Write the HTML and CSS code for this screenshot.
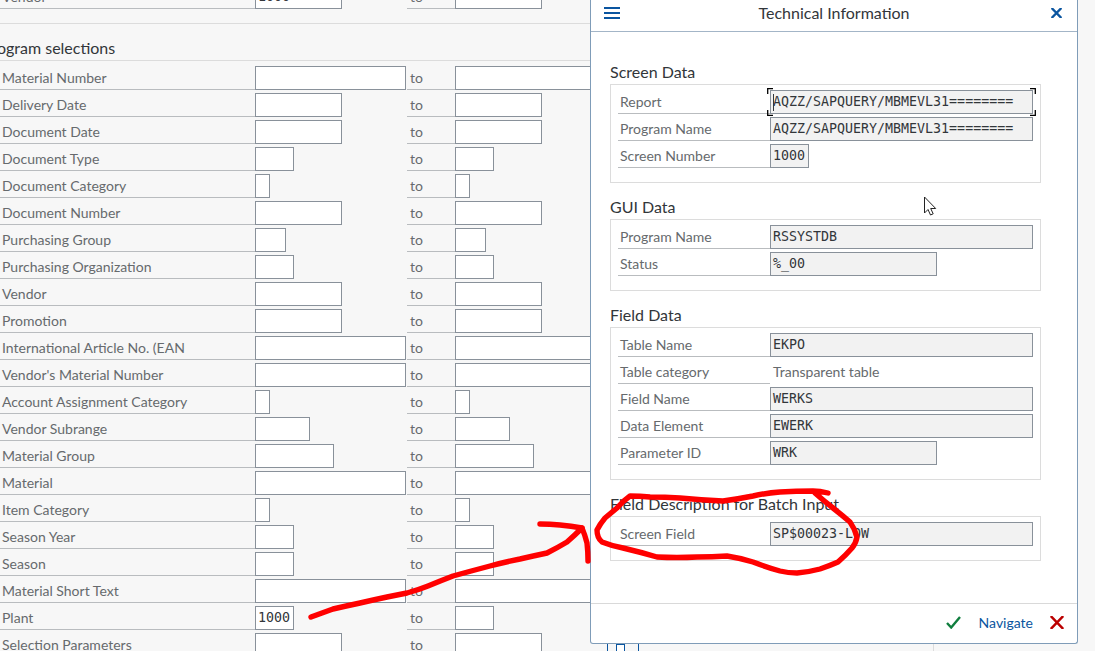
FILE: index.html
```html
<!DOCTYPE html>
<html lang="en">
<head>
<meta charset="utf-8">
<title>Technical Information</title>
<link rel="stylesheet" href="styles.css">
</head>
<body>
<main class="page">
  <div class="row row-cut">
    <div class="label">Vendor</div>
    <div class="cell"><div class="input w87 mono">1000</div></div>
    <div class="label to">to</div>
    <div class="cell"><div class="input w87"></div></div>
  </div>
  <div class="spacer"></div>
  <h2 class="group-title"><span>Program selections</span></h2>
  <div class="rows">
    <div class="row"><div class="label">Material Number</div><div class="cell"><div class="input w151"></div></div><div class="label to">to</div><div class="cell"><div class="input w151"></div></div></div>
    <div class="row"><div class="label">Delivery Date</div><div class="cell"><div class="input w87"></div></div><div class="label to">to</div><div class="cell"><div class="input w87"></div></div></div>
    <div class="row"><div class="label">Document Date</div><div class="cell"><div class="input w87"></div></div><div class="label to">to</div><div class="cell"><div class="input w87"></div></div></div>
    <div class="row"><div class="label">Document Type</div><div class="cell"><div class="input w39"></div></div><div class="label to">to</div><div class="cell"><div class="input w39"></div></div></div>
    <div class="row"><div class="label">Document Category</div><div class="cell"><div class="input w15"></div></div><div class="label to">to</div><div class="cell"><div class="input w15"></div></div></div>
    <div class="row"><div class="label">Document Number</div><div class="cell"><div class="input w87"></div></div><div class="label to">to</div><div class="cell"><div class="input w87"></div></div></div>
    <div class="row"><div class="label">Purchasing Group</div><div class="cell"><div class="input w31"></div></div><div class="label to">to</div><div class="cell"><div class="input w31"></div></div></div>
    <div class="row"><div class="label">Purchasing Organization</div><div class="cell"><div class="input w39"></div></div><div class="label to">to</div><div class="cell"><div class="input w39"></div></div></div>
    <div class="row"><div class="label">Vendor</div><div class="cell"><div class="input w87"></div></div><div class="label to">to</div><div class="cell"><div class="input w87"></div></div></div>
    <div class="row"><div class="label">Promotion</div><div class="cell"><div class="input w87"></div></div><div class="label to">to</div><div class="cell"><div class="input w87"></div></div></div>
    <div class="row"><div class="label">International Article No. (EAN</div><div class="cell"><div class="input w151"></div></div><div class="label to">to</div><div class="cell"><div class="input w151"></div></div></div>
    <div class="row"><div class="label">Vendor's Material Number</div><div class="cell"><div class="input w151"></div></div><div class="label to">to</div><div class="cell"><div class="input w151"></div></div></div>
    <div class="row"><div class="label">Account Assignment Category</div><div class="cell"><div class="input w15"></div></div><div class="label to">to</div><div class="cell"><div class="input w15"></div></div></div>
    <div class="row"><div class="label">Vendor Subrange</div><div class="cell"><div class="input w55"></div></div><div class="label to">to</div><div class="cell"><div class="input w55"></div></div></div>
    <div class="row"><div class="label">Material Group</div><div class="cell"><div class="input w79"></div></div><div class="label to">to</div><div class="cell"><div class="input w79"></div></div></div>
    <div class="row"><div class="label">Material</div><div class="cell"><div class="input w151"></div></div><div class="label to">to</div><div class="cell"><div class="input w151"></div></div></div>
    <div class="row"><div class="label">Item Category</div><div class="cell"><div class="input w15"></div></div><div class="label to">to</div><div class="cell"><div class="input w15"></div></div></div>
    <div class="row"><div class="label">Season Year</div><div class="cell"><div class="input w39"></div></div><div class="label to">to</div><div class="cell"><div class="input w39"></div></div></div>
    <div class="row"><div class="label">Season</div><div class="cell"><div class="input w39"></div></div><div class="label to">to</div><div class="cell"><div class="input w39"></div></div></div>
    <div class="row"><div class="label">Material Short Text</div><div class="cell"><div class="input w151"></div></div><div class="label to">to</div><div class="cell"><div class="input w151"></div></div></div>
    <div class="row"><div class="label">Plant</div><div class="cell"><div class="input w39 mono">1000</div></div><div class="label to">to</div><div class="cell"><div class="input w39"></div></div></div>
    <div class="row"><div class="label">Selection Parameters</div><div class="cell"><div class="input w87"></div></div><div class="label to">to</div><div class="cell"><div class="input w87"></div><div class="tool-btn"><span class="tool-box"></span></div><div class="side-rule"></div></div></div>
  </div>

  <section class="dialog">
    <header class="dialog-head">
      <svg class="icon-menu" width="16" height="12" viewBox="0 0 16 12"><path fill="#0a55a0" d="M0 0h16v2H0zM0 5h16v2H0zM0 10h16v2H0z"/></svg>
      <h1 class="dialog-title">Technical Information</h1>
      <svg class="icon-close" width="11" height="10" viewBox="0 0 11 10"><path fill="none" stroke="#0a55a0" stroke-width="2.4" d="M.6 0 10.4 10M10.4 0 .6 10"/></svg>
    </header>
    <div class="dialog-body">
      <h3 class="sec-title">Screen Data</h3>
      <div class="box">
        <div class="drow"><div class="dlabel">Report</div><div class="dinput w263 mono"><span class="caret"></span>AQZZ/SAPQUERY/MBMEVL31========<svg class="focus-marks" width="269" height="28" viewBox="0 0 269 28"><path fill="none" stroke="#000" stroke-width="1.300" d="M6 .7H.7V6M263 .7h5.300V6M6 27.300H.7V22M263 27.300h5.300V22"/></svg></div></div>
        <div class="drow"><div class="dlabel">Program Name</div><div class="dinput w263 mono">AQZZ/SAPQUERY/MBMEVL31========</div></div>
        <div class="drow"><div class="dlabel">Screen Number</div><div class="dinput w39 mono">1000</div></div>
      </div>
      <h3 class="sec-title">GUI Data</h3>
      <div class="box">
        <div class="drow"><div class="dlabel">Program Name</div><div class="dinput w263 mono">RSSYSTDB</div></div>
        <div class="drow"><div class="dlabel">Status</div><div class="dinput w167 mono">%_00</div></div>
      </div>
      <h3 class="sec-title">Field Data</h3>
      <div class="box">
        <div class="drow"><div class="dlabel">Table Name</div><div class="dinput w263 mono">EKPO</div></div>
        <div class="drow"><div class="dlabel">Table category</div><div class="dtext">Transparent table</div></div>
        <div class="drow"><div class="dlabel">Field Name</div><div class="dinput w263 mono">WERKS</div></div>
        <div class="drow"><div class="dlabel">Data Element</div><div class="dinput w263 mono">EWERK</div></div>
        <div class="drow"><div class="dlabel">Parameter ID</div><div class="dinput w167 mono">WRK</div></div>
      </div>
      <h3 class="sec-title">Field Description for Batch Input</h3>
      <div class="box">
        <div class="drow"><div class="dlabel">Screen Field</div><div class="dinput w263 mono">SP$00023-LOW</div></div>
      </div>
    </div>
    <footer class="dialog-foot">
      <svg class="icon-ok" width="15" height="13" viewBox="0 0 15 13"><path fill="none" stroke="#107e3e" stroke-width="2.4" d="M1 7l4.200 4.500L14 1"/></svg>
      <a class="nav-link">Navigate</a>
      <svg class="icon-cancel" width="14" height="13" viewBox="0 0 14 13"><path fill="none" stroke="#bb0000" stroke-width="2.400" d="M.8 0l12.400 13M13.200 0 .8 13"/></svg>
    </footer>
  </section>

  <svg class="pointer" width="14" height="22" viewBox="0 0 14 22"><path fill="#fff" stroke="#222" d="M1.500 1v16l3.500-3.500 2.500 5.500 2.700-1.200-2.500-5.300h5z"/></svg>

  <svg class="ink" width="1095" height="651" viewBox="0 0 1095 651">
    <g fill="none" stroke="#f00" stroke-width="5.400" stroke-linecap="round" stroke-linejoin="round">
      <path d="M828 493Q820 491 813 491Q796 491 780 492Q766 493 753 496Q738 499 723 501Q701 500 680 498Q665 497 650 497Q640 496 630 496Q623 501 617 508Q611 513 605 518Q600 524 597 530Q597 538 602 542Q612 546 623 548Q640 552 657 557Q677 558 697 557Q712 557 727 556Q740 558 753 562Q766 567 780 571Q788 573 797 573Q809 572 820 569Q829 566 838 562Q846 555 852 548Q856 543 857 537Q855 529 850 522Q842 515 833 508Q824 501 815 493"/>
      <path d="M311 617Q322 613 333 609Q346 606 360 603Q373 600 387 597Q397 595 407 593Q418 590 428 586Q440 581 453 576Q471 571 490 566Q505 562 520 559Q533 556 547 553Q557 548 567 542Q575 535 582 528Q585 535 587 543Q588 552 588 561"/>
      <path d="M540 524Q550 524 560 525Q571 526 582 528"/>
    </g>
  </svg>
</main>
</body>
</html>
```
FILE: styles.css
```css
* { box-sizing: border-box; }
html, body { margin: 0; padding: 0; }
body { background: #f7f7f7; font-family: Lato, "Noto Sans", sans-serif; color: #32363a; }
.page { position: relative; width: 1095px; height: 651px; overflow: hidden; background: #f7f7f7; }

.row { display: grid; grid-template-columns: 255px 152px 48px 1fr; grid-template-rows: 27px; height: 27px; align-items: end; }
.row-cut { grid-template-rows: 9px; height: 9px; overflow: hidden; }
.rows { padding-top: 2px; }
.spacer { width: 1000px; height: 15px; border-bottom: 1px solid #dcdcdc; }
.group-title { width: 1000px; margin: 0; height: 37px; border-bottom: 1px solid #dcdcdc; font-size: 16px; font-weight: 400; line-height: 24px; padding-top: 12px; white-space: nowrap; color: #32363a; }
.group-title span { display: block; margin-left: -18px; }

.label { height: 24px; line-height: 24px; font-size: 14px; color: #666a6d; padding-left: 2px; border-bottom: 1px solid #b9bcbf; white-space: nowrap; overflow: hidden; }
.to { padding-left: 3px; }
.cell { display: flex; height: 24px; }

.input { height: 24px; background: #fff; border: 1px solid #89919a; flex: none; line-height: 22px; padding-left: 2px; overflow: hidden; white-space: nowrap; }
.mono { font-family: "DejaVu Sans Mono", monospace; font-size: 13.3px; color: #32363a; }
.w15 { width: 15px; }
.w31 { width: 31px; }
.w39 { width: 39px; }
.w55 { width: 55px; }
.w79 { width: 79px; }
.w87 { width: 87px; }
.w151 { width: 151px; }
.w167 { width: 167px; }
.w263 { width: 263px; }

.tool-btn { flex: none; width: 32px; height: 24px; margin-left: 65px; border-left: 1px solid #0a55a0; border-right: 1px solid #0a55a0; padding: 11px 0 0 8px; }
.tool-box { display: block; width: 9px; height: 13px; border: 1px solid #0a55a0; background: #fff; }
.side-rule { flex: none; width: 1px; height: 24px; margin-left: 294px; background: #dcdcdc; }

.dialog { position: absolute; left: 590px; top: 0; width: 488px; height: 644px; background: #fff; border: 1px solid #7f9cb8; border-top: 0; border-radius: 0 0 3px 3px; display: flex; flex-direction: column; }
.dialog-head { flex: none; height: 32px; border-bottom: 1px solid #a3b5c7; display: flex; align-items: center; padding: 0 15px 5px 13px; position: relative; justify-content: space-between; }
.dialog-title { position: absolute; left: 0; right: 0; top: 0; margin: 0; font-size: 16px; font-weight: 400; line-height: 26px; text-align: center; color: #32363a; }

.dialog-body { flex: 1; padding: 16px 0 0 19px; }
.sec-title { margin: 0; height: 36px; padding-top: 12px; line-height: 24px; font-size: 16px; font-weight: 400; color: #32363a; white-space: nowrap; }
.box { width: 431px; border: 1px solid #dcdcdc; padding: 5px 7px 11px; }
.drow { display: flex; height: 27px; }
.dlabel { flex: none; width: 152px; height: 24px; line-height: 24px; padding-left: 2px; font-size: 14px; color: #666a6d; border-bottom: 1px solid #b9bcbf; white-space: nowrap; }
.dinput { flex: none; height: 24px; line-height: 22px; padding-left: 2px; background: #f2f2f2; border: 1px solid #89919a; white-space: nowrap; position: relative; }
.dtext { flex: none; height: 24px; line-height: 24px; padding-left: 3px; font-size: 14px; color: #666a6d; }
.caret { position: absolute; left: 2px; top: 3px; width: 1px; height: 17px; background: #32363a; }
.focus-marks { position: absolute; left: -4px; top: -3px; }

.dialog-foot { flex: none; height: 40px; border-top: 1px solid #d9d9d9; display: flex; align-items: center; justify-content: flex-end; padding: 0 13px 2px 0; }
.nav-link { font-size: 14px; color: #0a55a0; margin: 0 17px 0 18px; }

.pointer { position: absolute; left: 923px; top: 196px; }
.ink { position: absolute; left: 0; top: 0; pointer-events: none; }
```
